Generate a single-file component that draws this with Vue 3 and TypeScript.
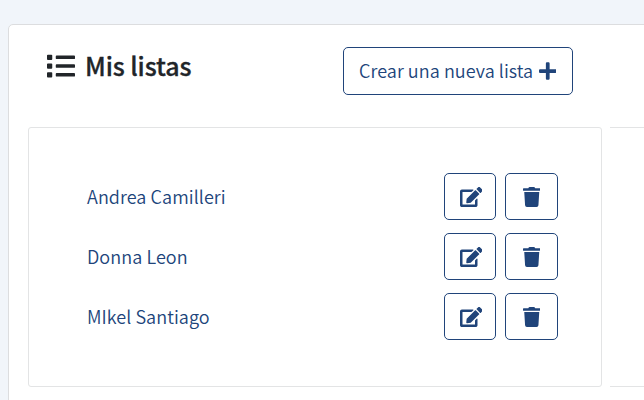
<script setup lang="ts">
interface BookList {
  id: number
  name: string
}

const lists: BookList[] = [
  { id: 1, name: 'Andrea Camilleri' },
  { id: 2, name: 'Donna Leon' },
  { id: 3, name: 'MIkel Santiago' },
]
</script>

<template>
  <main class="page">
    <section class="card">
      <header class="card-header">
        <h1 class="title">
          <svg class="title-icon" viewBox="0 0 512 512" aria-hidden="true">
            <path d="M80 368H16a16 16 0 0 0-16 16v64a16 16 0 0 0 16 16h64a16 16 0 0 0 16-16v-64a16 16 0 0 0-16-16zm0-320H16A16 16 0 0 0 0 64v64a16 16 0 0 0 16 16h64a16 16 0 0 0 16-16V64a16 16 0 0 0-16-16zm0 160H16a16 16 0 0 0-16 16v64a16 16 0 0 0 16 16h64a16 16 0 0 0 16-16v-64a16 16 0 0 0-16-16zm416 176H176a16 16 0 0 0-16 16v32a16 16 0 0 0 16 16h320a16 16 0 0 0 16-16v-32a16 16 0 0 0-16-16zm0-320H176a16 16 0 0 0-16 16v32a16 16 0 0 0 16 16h320a16 16 0 0 0 16-16V80a16 16 0 0 0-16-16zm0 160H176a16 16 0 0 0-16 16v32a16 16 0 0 0 16 16h320a16 16 0 0 0 16-16v-32a16 16 0 0 0-16-16z" />
          </svg>
          <span class="title-text">Mis listas</span>
        </h1>
        <button class="btn create" type="button">
          <span class="create-text">Crear una nueva lista</span>
          <svg class="plus" viewBox="0 0 448 512" aria-hidden="true">
            <path d="M416 208H272V64c0-17.67-14.33-32-32-32h-32c-17.67 0-32 14.33-32 32v144H32c-17.67 0-32 14.33-32 32v32c0 17.67 14.33 32 32 32h144v144c0 17.67 14.33 32 32 32h32c17.67 0 32-14.33 32-32V304h144c17.67 0 32-14.33 32-32v-32c0-17.67-14.33-32-32-32z" />
          </svg>
        </button>
      </header>
      <div class="panels">
        <ul class="panel lists">
          <li v-for="list in lists" :key="list.id" class="row">
            <a class="name">{{ list.name }}</a>
            <button class="btn edit" type="button">
              <svg viewBox="0 0 576 512" aria-hidden="true">
                <path d="M402.6 83.2l90.2 90.2c3.8 3.8 3.8 10 0 13.8L274.4 405.6l-92.8 10.3c-12.4 1.4-22.9-9.1-21.5-21.5l10.3-92.8L388.8 83.2c3.8-3.8 10-3.8 13.8 0zm162-22.9l-48.8-48.8c-15.2-15.2-39.9-15.2-55.2 0l-35.4 35.4c-3.8 3.8-3.8 10 0 13.8l90.2 90.2c3.8 3.8 10 3.8 13.8 0l35.4-35.4c15.2-15.3 15.2-40 0-55.2zM384 346.2V448H64V128h229.8c3.2 0 6.2-1.3 8.5-3.5l40-40c7.6-7.6 2.2-20.5-8.5-20.5H48C21.5 64 0 85.5 0 112v352c0 26.5 21.5 48 48 48h352c26.5 0 48-21.5 48-48V306.2c0-10.7-12.9-16-20.5-8.5l-40 40c-2.2 2.3-3.5 5.3-3.5 8.5z" />
              </svg>
            </button>
            <button class="btn remove" type="button">
              <svg viewBox="0 0 448 512" aria-hidden="true">
                <path d="M432 32H312l-9.4-18.7A24 24 0 0 0 281.1 0H166.8a23.72 23.72 0 0 0-21.4 13.3L136 32H16A16 16 0 0 0 0 48v32a16 16 0 0 0 16 16h416a16 16 0 0 0 16-16V48a16 16 0 0 0-16-16zM53.2 467a48 48 0 0 0 47.9 45h245.8a48 48 0 0 0 47.9-45L416 128H32z" />
              </svg>
            </button>
          </li>
        </ul>
        <div class="panel next"></div>
      </div>
    </section>
  </main>
</template>

<style>
body {
  margin: 0;
  background: #f1f5fa;
}
</style>

<style scoped>
.page {
  box-sizing: border-box;
  height: 400px;
  padding: 24px 0 0 8px;
  overflow: hidden;
  font-family: "Noto Sans CJK SC", "Noto Sans", sans-serif;
  font-weight: 350;
  color: #212529;
}
.card {
  box-sizing: border-box;
  width: 700px;
  height: 420px;
  padding: 22px 0 0 19px;
  border: 1px solid #dcdddf;
  border-radius: 5px;
  background: #fff;
}
.card-header {
  display: flex;
  justify-content: space-between;
  width: 545px;
  height: 80px;
}
.title {
  display: flex;
  align-items: center;
  gap: 10px;
  height: 37px;
  margin: 0 0 0 19px;
  font-size: 25px;
  font-weight: 500;
  line-height: 37px;
  white-space: nowrap;
}
.title-text {
  padding-bottom: 1px;
  letter-spacing: -0.1px;
  -webkit-text-stroke: 0.3px currentColor;
}
svg {
  display: block;
  flex: none;
  fill: currentColor;
}
.title-icon {
  width: 28px;
  height: 28px;
}
.btn {
  display: flex;
  align-items: center;
  justify-content: center;
  box-sizing: border-box;
  height: 47px;
  margin: 0;
  padding: 0;
  border: 1px solid #20447a;
  border-radius: 5px;
  background: #fff;
  color: #20447a;
  font: inherit;
  font-size: 18px;
  white-space: nowrap;
}
.create {
  justify-content: space-between;
  width: 230px;
  height: 48px;
  padding: 0 16px 0 15px;
}
.create-text {
  padding-bottom: 2px;
  letter-spacing: 0.06px;
}
.plus {
  width: 17.5px;
  height: 20px;
}
.panels {
  display: flex;
  gap: 8px;
}
.panel {
  box-sizing: border-box;
  height: 260px;
  border: 1px solid #e3e4e5;
  border-radius: 3px;
}
.lists {
  display: flex;
  flex-direction: column;
  gap: 13px;
  width: 574px;
  margin: 0;
  padding: 45px 43px 0 58px;
  list-style: none;
}
.row {
  display: flex;
  align-items: center;
  height: 47px;
}
.name {
  flex: 1;
  padding-bottom: 2px;
  color: #20447a;
  font-size: 18px;
  line-height: 28px;
  letter-spacing: 0.07px;
}
.edit {
  width: 52px;
  padding-left: 2px;
  margin-right: 9px;
}
.edit svg {
  width: 22.5px;
  height: 20px;
}
.remove {
  width: 53px;
}
.remove svg {
  width: 17.5px;
  height: 20px;
}
.next {
  flex: 1;
  border-left: 0;
  border-right: 0;
  border-radius: 0;
}
</style>
